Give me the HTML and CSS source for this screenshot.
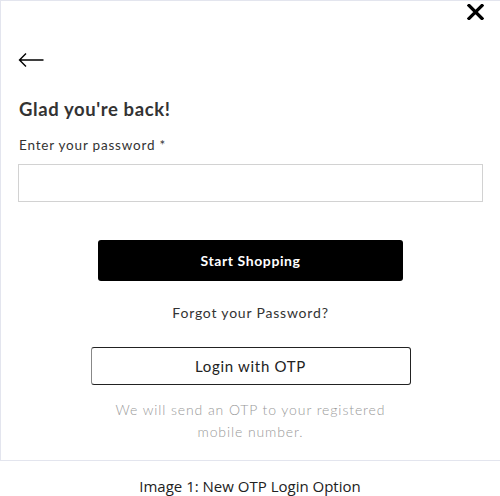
FILE: index.html
```html
<!DOCTYPE html>
<html lang="en">
<head>
<meta charset="utf-8">
<title>Login</title>
<link rel="stylesheet" href="styles.css">
</head>
<body>
<figure class="figure">
  <div class="frame">
    <div class="top-row">
      <button class="close" aria-label="Close">
        <svg width="17" height="16" viewBox="0 0 17 16"><path d="M2 1.5 L15 14.5 M15 1.5 L2 14.5" stroke="#000" stroke-width="3.2" stroke-linecap="square" fill="none"/></svg>
      </button>
    </div>
    <button class="back" aria-label="Back">
      <svg width="26" height="16" viewBox="0 0 26 16"><path d="M25.5 8 H1.5 M8 1.5 L1.5 8 L8 14.5" stroke="#000" stroke-width="1.4" fill="none"/></svg>
    </button>
    <h1 class="title">Glad you're back!</h1>
    <label class="label" for="pw">Enter your password *</label>
    <input class="input" id="pw" type="password">
    <div class="actions">
      <button class="btn-primary">Start Shopping</button>
      <a class="forgot" href="#">Forgot your Password?</a>
      <button class="btn-outline">Login with OTP</button>
      <p class="hint">We will send an OTP to your registered<br>mobile number.</p>
    </div>
  </div>
  <figcaption class="caption">Image 1: New OTP Login Option</figcaption>
</figure>
</body>
</html>
```
FILE: styles.css
```css
* { box-sizing: border-box; }
html, body { margin: 0; padding: 0; background: #fff; }
body { font-family: Lato, "Open Sans", sans-serif; color: #333; }
.figure { margin: 0; width: 500px; }
.frame {
  height: 461px;
  border: 1px solid #e3e5ee;
  border-right: none;
  padding: 0 16px 0 17px;
  display: flex;
  flex-direction: column;
}
.top-row { display: flex; justify-content: flex-end; height: 28px; padding-top: 3px; padding-right: 0; }
.close { background: none; border: 0; padding: 0; width: 17px; height: 16px; display: block; }
.back { background: none; border: 0; padding: 0; margin-top: 23px; width: 26px; height: 16px; display: block; align-self: flex-start; }
.title {
  margin: 29px 0 0 1px;
  font-size: 18.5px;
  font-weight: 700;
  letter-spacing: 0.6px;
  color: #333;
  line-height: 24px;
}
.label {
  margin: 15px 0 0 1px;
  font-size: 13.5px;
  font-weight: 400;
  letter-spacing: 0.8px;
  color: #333;
  line-height: 18px;
}
.input {
  margin-top: 10px;
  width: 465px;
  height: 38px;
  border: 1px solid #d2d2d2;
  border-radius: 0;
}
.actions { display: flex; flex-direction: column; align-items: center; padding-right: 1px; }
.btn-primary {
  margin-top: 38px;
  width: 305px;
  height: 41px;
  background: #000;
  color: #fff;
  border: 0;
  border-radius: 3px;
  font-family: inherit;
  font-size: 14px;
  font-weight: 700;
  letter-spacing: 0.6px;
}
.forgot {
  margin-top: 22px;
  color: #333;
  text-decoration: none;
  font-size: 14px;
  letter-spacing: 0.8px;
  line-height: 20px;
}
.btn-outline {
  margin-top: 24px;
  width: 320px;
  height: 38px;
  background: #fff;
  border: 1px solid #222;
  border-left-color: #888;
  border-radius: 3px;
  font-family: inherit;
  font-size: 15px;
  color: #222;
  letter-spacing: 0.7px;
}
.hint {
  margin: 14px 0 0;
  text-align: center;
  color: #999;
  font-weight: 300;
  font-size: 14px;
  letter-spacing: 0.9px;
  line-height: 22px;
}
.caption {
  margin-top: 14px;
  text-align: center;
  font-family: "Open Sans", sans-serif;
  font-size: 15px;
  color: #222;
  line-height: 22px;
}
```
